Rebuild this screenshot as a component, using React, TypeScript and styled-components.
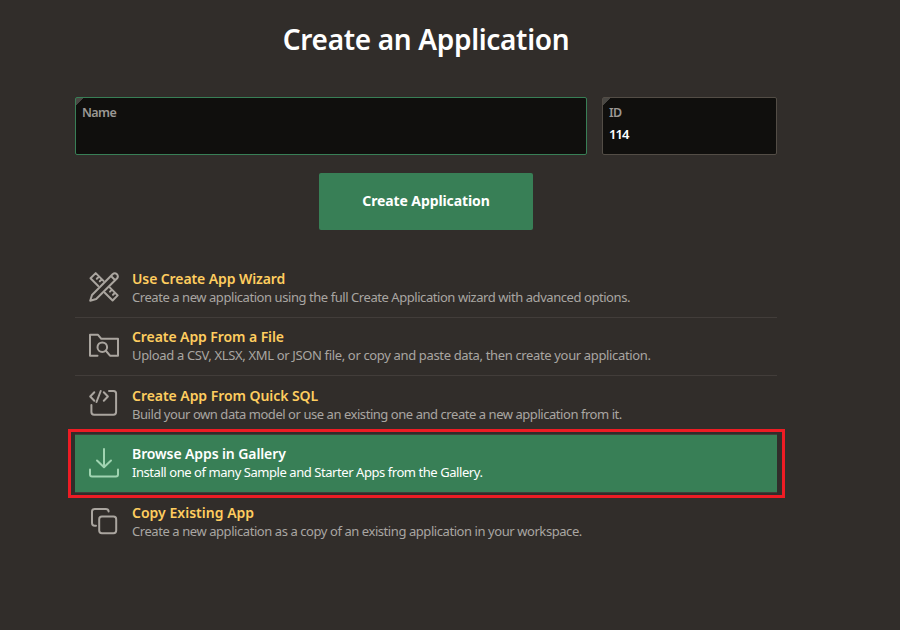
import React from "react";
import styled, { createGlobalStyle, css } from "styled-components";

const GlobalStyle = createGlobalStyle`
  * { box-sizing: border-box; }
  body {
    margin: 0;
    background: #312d2a;
    color: #fff;
    font-family: "Noto Sans", "Open Sans", sans-serif;
  }
`;

const Page = styled.main`
  width: 900px;
  height: 630px;
  overflow: hidden;
  padding: 19px 123px 0 75px;
  background: #312d2a;
`;

const Heading = styled.h1`
  margin: 0;
  height: 40px;
  line-height: 40px;
  font-size: 28px;
  font-weight: 600;
  letter-spacing: -0.33px;
  text-align: center;
  white-space: nowrap;
`;

const Fields = styled.div`
  display: flex;
  gap: 15px;
  margin-top: 38px;
`;

const Field = styled.label<{ $width: number; $active?: boolean }>`
  display: block;
  width: ${(p) => p.$width}px;
  height: 58px;
  padding: 6px 6px 0;
  border: 1px solid ${(p) => (p.$active ? "#387f56" : "#534d46")};
  border-radius: 2px;
  background: linear-gradient(135deg, #494743 5px, transparent 5.5px) #100f0d;
`;

const FieldLabel = styled.span`
  display: block;
  height: 18px;
  line-height: 18px;
  font-size: 12.5px;
  font-weight: 600;
  letter-spacing: -0.6px;
  color: #9b9894;
`;

const FieldValue = styled.span`
  display: block;
  height: 24px;
  line-height: 24px;
  font-size: 13px;
  font-weight: 600;
  letter-spacing: -0.9px;
`;

const CreateButton = styled.button`
  display: block;
  width: 214px;
  height: 57px;
  margin: 18px auto 0;
  padding: 0 0 2px;
  border: 0;
  border-radius: 2px;
  background: #387f56;
  color: #fff;
  font: 700 14px "Noto Sans", sans-serif;
  letter-spacing: -0.1px;
`;

const Options = styled.ul`
  list-style: none;
  margin: 30px 0 0;
  padding: 0;
`;

const Option = styled.li<{ $height: number; $selected?: boolean; $last?: boolean }>`
  position: relative;
  display: flex;
  align-items: center;
  height: ${(p) => p.$height}px;
  padding-left: 13px;
  border-bottom: 1px solid ${(p) => (p.$last ? "transparent" : "#423d3a")};
  color: #aaa59f;
  ${(p) =>
    p.$selected &&
    css`
      background: #387f56;
      background-clip: padding-box;
      color: #a0d4b1;
    `}
`;

const Highlight = styled.span`
  position: absolute;
  inset: -6px -8px -6px -7px;
  border: 3px solid #ed1c24;
  pointer-events: none;
`;

const Icon = styled.svg<{ $top?: number }>`
  flex: none;
  width: 32px;
  height: 32px;
  margin-right: 12px;
  margin-top: ${(p) => p.$top ?? -3}px;
  fill: none;
  stroke: currentColor;
  stroke-width: 2;
  stroke-linecap: round;
  stroke-linejoin: round;
`;

const OptionText = styled.div`
  padding-bottom: 2px;
  white-space: nowrap;
`;

const Title = styled.div<{ $selected?: boolean; $spacing: number }>`
  height: 19px;
  line-height: 20px;
  font-size: 14px;
  font-weight: 600;
  letter-spacing: ${(p) => p.$spacing}px;
  color: ${(p) => (p.$selected ? "#fff" : "#ffcd5f")};
`;

const Description = styled.div<{ $selected?: boolean; $spacing: number }>`
  height: 18px;
  line-height: 18px;
  font-size: 13px;
  letter-spacing: ${(p) => p.$spacing}px;
  color: ${(p) => (p.$selected ? "#fff" : "#a9a6a2")};
`;

const WizardIcon = () => (
  <Icon viewBox="0 0 32 32" $top={-4}>
    <path d="M2.2 29.8 4 24 24.6 3.2q2.2-1.9 4.3 0 1.900 2.200 0 4.300L8.200 28Z M23 5l4.200 4.200" />
    <path d="M10.200 15 2.500 7.300 7.700 2.100l7.800 7.800 M10.800 5.800 8.800 7.800 M13.400 8.600l-1.600 1.600" />
    <path d="m16.800 21.700 7.800 7.800 5.100-5.100-8-8 M24 18.600l-2 2 M27 21.700l-2 2" />
  </Icon>
);

const FileIcon = () => (
  <Icon viewBox="0 0 32 32" $top={-4}>
    <path d="M9.5 26.7H2V5.8h8l3.3 4H30v16.9h-8l-4.3-5.2" />
    <circle cx="14.300" cy="18.200" r="4.800" />
  </Icon>
);

const SqlIcon = () => (
  <Icon viewBox="0 0 32 32" $top={-6}>
    <path d="m6.300 6.300-4.100 4.200 4.100 4.200 M12.700 5 8.500 16 M15.800 6.300l4.100 4.200-4.100 4.200" />
    <path d="M21 5h4.500q2.600 0 2.600 2.600V26q0 2.700-2.700 2.700H6.100Q3.400 28.700 3.400 26v-7" />
  </Icon>
);

const DownloadIcon = () => (
  <Icon viewBox="0 0 32 32" $top={-2}>
    <path d="M16 2v18 M9 13.500l7 6.700 7-6.700 M2 22.500v5q0 2 2 2h24q2 0 2-2v-5" />
  </Icon>
);

const CopyIcon = () => (
  <Icon viewBox="0 0 32 32" $top={-5}>
    <path d="M8 21.700H6.600Q4 21.700 4 19V7.600Q4 5 6.600 5H18q2.600 0 2.600 2.600" />
    <rect x="11.200" y="12.500" width="17" height="16.700" rx="2.700" />
  </Icon>
);

const options = [
  {
    icon: <WizardIcon />,
    title: "Use Create App Wizard",
    text: "Create a new application using the full Create Application wizard with advanced options.",
    height: 58,
    titleSpacing: -0.1,
    textSpacing: -0.44,
  },
  {
    icon: <FileIcon />,
    title: "Create App From a File",
    text: "Upload a CSV, XLSX, XML or JSON file, or copy and paste data, then create your application.",
    height: 58,
    titleSpacing: -0.08,
    textSpacing: -0.35,
  },
  {
    icon: <SqlIcon />,
    title: "Create App From Quick SQL",
    text: "Build your own data model or use an existing one and create a new application from it.",
    height: 59,
    titleSpacing: -0.05,
    textSpacing: -0.45,
  },
  {
    icon: <DownloadIcon />,
    title: "Browse Apps in Gallery",
    text: "Install one of many Sample and Starter Apps from the Gallery.",
    height: 58,
    selected: true,
    titleSpacing: -0.1,
    textSpacing: -0.44,
  },
  {
    icon: <CopyIcon />,
    title: "Copy Existing App",
    text: "Create a new application as a copy of an existing application in your workspace.",
    height: 59,
    titleSpacing: 0.02,
    textSpacing: -0.43,
  },
];

export default function App() {
  return (
    <>
      <GlobalStyle />
      <Page>
        <Heading>Create an Application</Heading>
        <Fields>
          <Field $width={512} $active>
            <FieldLabel>Name</FieldLabel>
          </Field>
          <Field $width={175}>
            <FieldLabel>ID</FieldLabel>
            <FieldValue>114</FieldValue>
          </Field>
        </Fields>
        <CreateButton>Create Application</CreateButton>
        <Options>
          {options.map((o, i) => (
            <Option key={o.title} $height={o.height} $selected={o.selected} $last={i === options.length - 1}>
              {o.icon}
              <OptionText>
                <Title $selected={o.selected} $spacing={o.titleSpacing}>{o.title}</Title>
                <Description $selected={o.selected} $spacing={o.textSpacing}>{o.text}</Description>
              </OptionText>
              {o.selected && <Highlight />}
            </Option>
          ))}
        </Options>
      </Page>
    </>
  );
}
